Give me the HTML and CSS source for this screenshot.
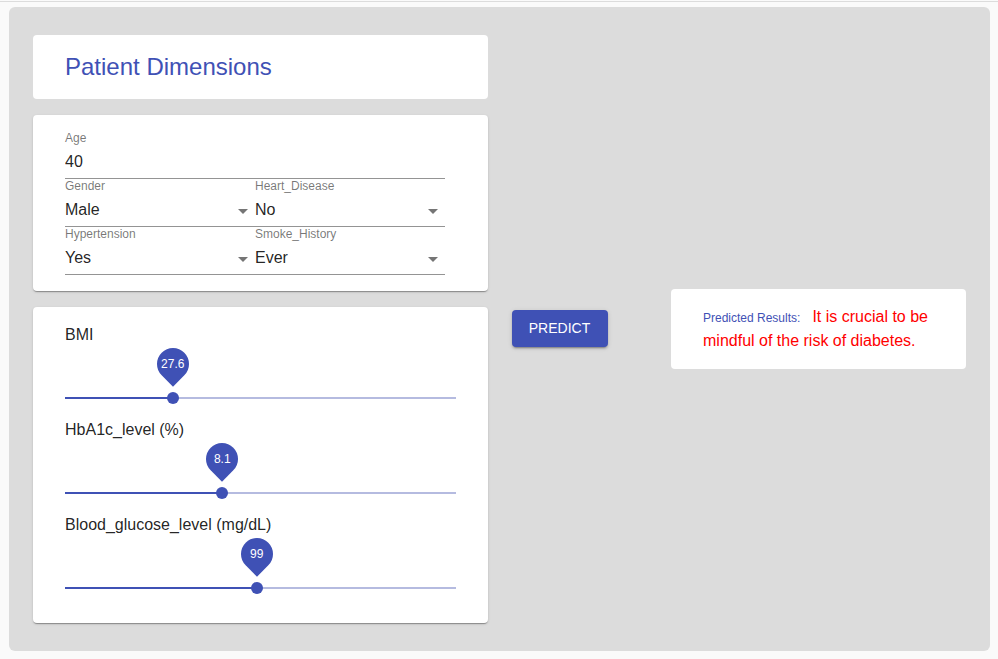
FILE: index.html
```html
<!DOCTYPE html>
<html lang="en">
<head>
<meta charset="utf-8">
<meta name="viewport" content="width=device-width, initial-scale=1">
<title>Patient Dimensions</title>
<link rel="stylesheet" href="styles.css">
</head>
<body>
<main class="panel">
  <form class="inputs" id="patient">
    <header class="card card-flat"><h1 class="title">Patient Dimensions</h1></header>
    <section class="card">
      <div class="fields">
        <div class="field field-wide">
          <label for="age">Age</label>
          <input id="age" type="text" inputmode="numeric" value="40">
        </div>
        <div class="field">
          <label for="gender">Gender</label>
          <select id="gender"><option>Male</option><option>Female</option></select>
          <svg class="arrow" viewBox="0 0 24 24" aria-hidden="true"><path d="M7 10l5 5 5-5z"/></svg>
        </div>
        <div class="field">
          <label for="heart">Heart_Disease</label>
          <select id="heart"><option>No</option><option>Yes</option></select>
          <svg class="arrow" viewBox="0 0 24 24" aria-hidden="true"><path d="M7 10l5 5 5-5z"/></svg>
        </div>
        <div class="field">
          <label for="hypertension">Hypertension</label>
          <select id="hypertension"><option>Yes</option><option>No</option></select>
          <svg class="arrow" viewBox="0 0 24 24" aria-hidden="true"><path d="M7 10l5 5 5-5z"/></svg>
        </div>
        <div class="field">
          <label for="smoke">Smoke_History</label>
          <select id="smoke"><option>Ever</option><option>Never</option></select>
          <svg class="arrow" viewBox="0 0 24 24" aria-hidden="true"><path d="M7 10l5 5 5-5z"/></svg>
        </div>
      </div>
    </section>
    <section class="card card-sliders">
      <div class="measure">
        <label for="bmi">BMI</label>
        <div class="slider" style="--pos: 27.6%">
          <input id="bmi" type="range" min="0" max="100" step="0.1" value="27.6">
          <output class="pin" for="bmi"><span>27.6</span></output>
        </div>
      </div>
      <div class="measure">
        <label for="hba1c">HbA1c_level (%)</label>
        <div class="slider" style="--pos: 40.2%">
          <input id="hba1c" type="range" min="4" max="14.2" step="0.1" value="8.1">
          <output class="pin" for="hba1c"><span>8.1</span></output>
        </div>
      </div>
      <div class="measure">
        <label for="glucose">Blood_glucose_level (mg/dL)</label>
        <div class="slider" style="--pos: 49.17%">
          <input id="glucose" type="range" min="40" max="160" step="1" value="99">
          <output class="pin" for="glucose"><span>99</span></output>
        </div>
      </div>
    </section>
  </form>
  <div class="action"><button class="predict" type="submit" form="patient">Predict</button></div>
  <section class="card card-flat result">
    <p><span class="result-label">Predicted Results:</span>It is crucial to be mindful of the risk of diabetes.</p>
  </section>
</main>
</body>
</html>
```
FILE: styles.css
```css
:root {
  --primary: #3f51b5;
  --text: rgba(0, 0, 0, 0.87);
  --muted: rgba(0, 0, 0, 0.54);
}

* { box-sizing: border-box; }

body {
  margin: 0;
  padding: 0 8px 8px 9px;
  background: #fafafa;
  color: var(--text);
  font: 16px/24px "Liberation Sans", Arial, sans-serif;
}

/* Divider under the app header, spanning the whole window */
body::before {
  content: "";
  display: block;
  height: 1px;
  margin: 0 -8px 5px -9px;
  border-bottom: 1px solid #dcdcdc;
}

.panel {
  display: grid;
  grid-template-columns: repeat(12, minmax(0, 1fr));
  column-gap: 24px;
  align-items: center;
  padding: 28px 24px;
  background: #dcdcdc;
  border-radius: 6px;
}

.inputs {
  grid-column: span 6;
  display: flex;
  flex-direction: column;
  gap: 16px;
}

.action {
  grid-column: span 2;
  padding-bottom: 2px;
}

.card {
  padding: 16px 32px;
  background: #fff;
  border-radius: 4px;
  box-shadow: 0 2px 1px -1px rgba(0, 0, 0, 0.2), 0 1px 1px 0 rgba(0, 0, 0, 0.14), 0 1px 3px 0 rgba(0, 0, 0, 0.12);
}

.card-flat { box-shadow: none; }
.card-sliders { padding-bottom: 15px; }

.title {
  margin: 0;
  color: var(--primary);
  font-size: 24px;
  font-weight: 400;
  line-height: 32px;
}

.fields {
  display: grid;
  grid-template-columns: 1fr 1fr;
  max-width: 380px;
}

.field {
  position: relative;
  display: flex;
  flex-direction: column;
  height: 48px;
  border-bottom: 1px solid rgba(0, 0, 0, 0.42);
}

.field-wide { grid-column: span 2; }

.field label {
  color: var(--muted);
  font-size: 12px;
  line-height: 14px;
}

.field input,
.field select {
  width: 100%;
  height: 33px;
  margin: 0;
  padding: 1px 0 0;
  border: 0;
  border-radius: 0;
  outline: 0;
  background: transparent;
  color: inherit;
  font: inherit;
  appearance: none;
}

.arrow {
  position: absolute;
  right: 0;
  bottom: 3px;
  width: 24px;
  height: 24px;
  fill: var(--muted);
  pointer-events: none;
}

.measure { padding-bottom: 6px; }
.measure label { display: block; }

.slider {
  position: relative;
  height: 28px;
  margin-top: 37px;
  background:
    linear-gradient(var(--primary), var(--primary)) 0 center / var(--pos) 2px no-repeat,
    linear-gradient(#b5bbe0, #b5bbe0) 0 center / 100% 2px no-repeat;
}

/* Half a thumb wider on each side, so the thumb centre spans the whole rail */
.slider input {
  display: block;
  width: calc(100% + 12px);
  height: 28px;
  margin: 0 -6px;
  background: transparent;
  appearance: none;
}

.slider input::-webkit-slider-thumb {
  width: 12px;
  height: 12px;
  border-radius: 50%;
  background: var(--primary);
  appearance: none;
}

.pin {
  position: absolute;
  left: var(--pos);
  bottom: 32px;
  display: flex;
  align-items: center;
  justify-content: center;
  width: 32px;
  height: 32px;
  border-radius: 50% 50% 50% 0;
  background: var(--primary);
  color: #fff;
  font-size: 12px;
  line-height: 14px;
  transform: translateX(-50%) rotate(-45deg);
}

.pin span { transform: rotate(45deg); }

.predict {
  display: block;
  min-width: 96px;
  height: 37px;
  padding: 0 16px;
  border: 0;
  border-radius: 4px;
  background: var(--primary);
  color: #fff;
  font: 14px/24px "Liberation Sans", Arial, sans-serif;
  text-transform: uppercase;
  box-shadow: 0 3px 1px -2px rgba(0, 0, 0, 0.2), 0 2px 2px 0 rgba(0, 0, 0, 0.14), 0 1px 5px 0 rgba(0, 0, 0, 0.12);
}

.result {
  grid-column: span 4;
  color: #f00;
}

.result p { margin: 0; }

.result-label {
  margin-right: 12px;
  color: var(--primary);
  font-size: 12px;
  line-height: 14px;
}
```
